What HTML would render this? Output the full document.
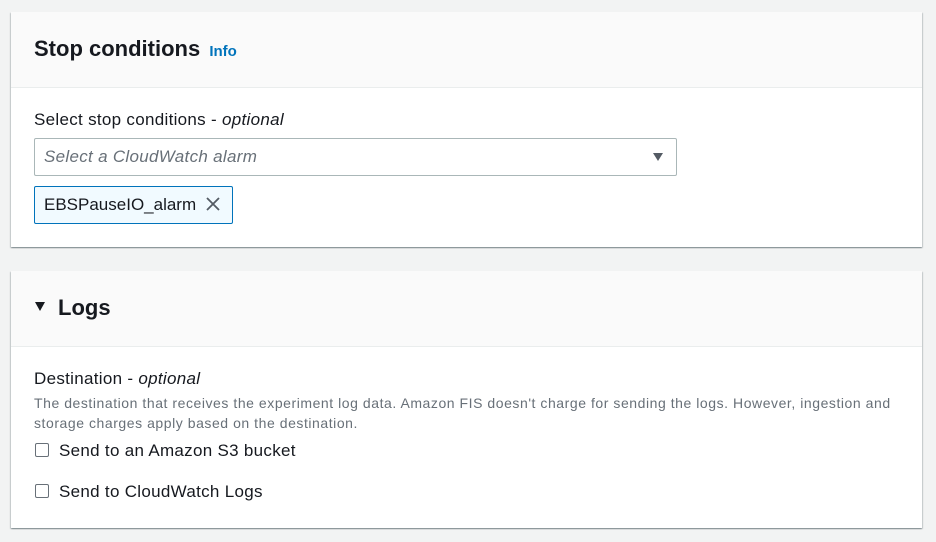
<!DOCTYPE html>
<html><head><style>
body{margin:0;width:936px;height:542px;background:#f2f3f3;font-family:"Liberation Sans",sans-serif;color:#16191f;position:relative;overflow:hidden}
.card{position:absolute;left:11px;width:911px;background:#fff;box-shadow:0 1px 1px 0 rgba(0,28,36,.3),1px 1px 1px 0 rgba(0,28,36,.15),-1px 1px 1px 0 rgba(0,28,36,.15)}
.hd{background:#fafafa;border-bottom:1px solid #eaeded;position:absolute;left:0;right:0;top:0}
.a{position:absolute;white-space:nowrap}
.h{font-size:22px;font-weight:bold;letter-spacing:0}
.lbl{font-size:17px;letter-spacing:0.3px}
.cb{position:absolute;width:12px;height:12px;border:1px solid #687078;border-radius:2px;background:#fff}
</style></head><body>
<div class="card" style="top:12px;height:235px">
 <div class="hd" style="height:75px"></div>
 <div class="a h" style="left:23px;top:24px">Stop conditions <span style="font-size:15px;color:#0073bb;letter-spacing:0;margin-left:3px">Info</span></div>
 <div class="a lbl" style="left:23px;top:98px">Select stop conditions - <i>optional</i></div>
 <div class="a" style="left:23px;top:126px;width:641px;height:36px;border:1px solid #aab7b8;border-radius:2px"></div>
 <div class="a lbl" style="left:33px;top:135px;font-style:italic;color:#687078">Select a CloudWatch alarm</div>
 <svg class="a" style="left:641px;top:140px" width="12" height="10"><path d="M1 1h10l-5 8z" fill="#545b64"/></svg>
 <div class="a" style="left:23px;top:174px;width:197px;height:36px;border:1px solid #0073bb;border-radius:2px;background:#f1faff"></div>
 <div class="a lbl" style="left:33px;top:183px;letter-spacing:0">EBSPauseIO_alarm</div>
 <svg class="a" style="left:195px;top:185px" width="14" height="14"><path d="M1 1L13 13M13 1L1 13" stroke="#545b64" stroke-width="1.8"/></svg>
</div>
<div class="card" style="top:271px;height:257px">
 <div class="hd" style="height:75px"></div>
 <svg class="a" style="left:23px;top:30px" width="12" height="10"><path d="M1 1h10l-5 9z" fill="#16191f"/></svg>
 <div class="a h" style="left:47px;top:24px">Logs</div>
 <div class="a lbl" style="left:23px;top:98px">Destination - <i>optional</i></div>
 <div class="a" style="left:23px;top:122px;font-size:14px;color:#687078;line-height:20px;width:870px;white-space:normal;letter-spacing:0.55px">The destination that receives the experiment log data. Amazon FIS doesn't charge for sending the logs. However, ingestion and storage charges apply based on the destination.</div>
 <div class="cb" style="left:24px;top:172px"></div>
 <div class="a lbl" style="left:48px;top:170px">Send to an Amazon S3 bucket</div>
 <div class="cb" style="left:24px;top:213px"></div>
 <div class="a lbl" style="left:48px;top:211px">Send to CloudWatch Logs</div>
</div>
</body></html>
